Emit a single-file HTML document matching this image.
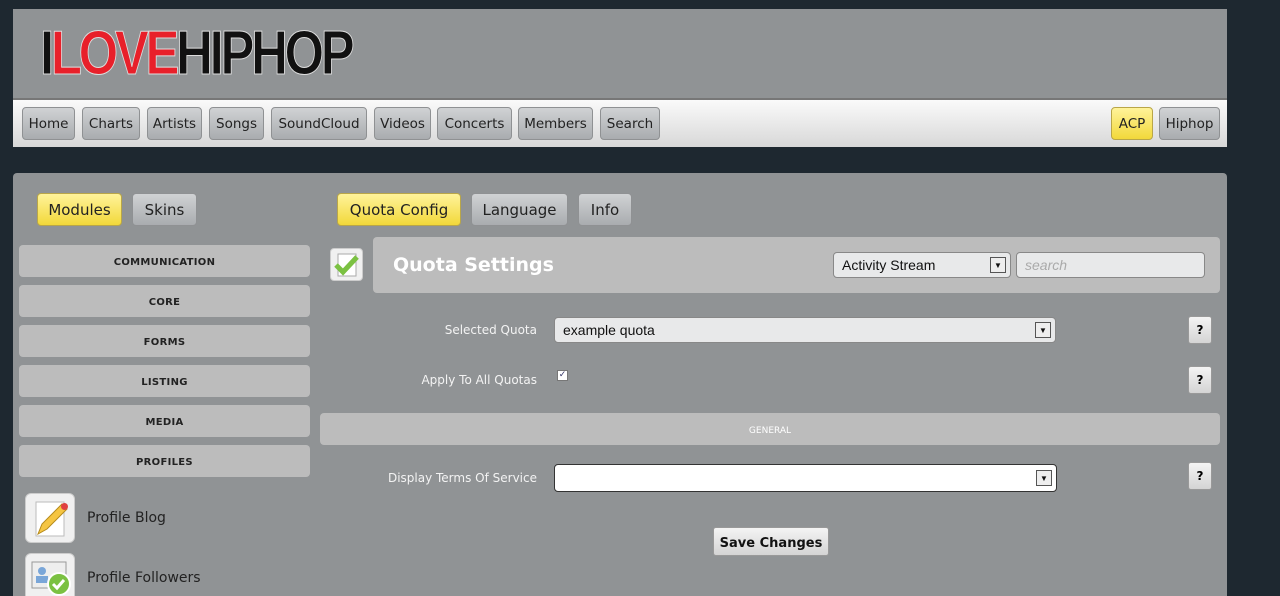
<!DOCTYPE html>
<html style="overflow:hidden;height:596px"><head><meta charset="utf-8"><style>
*{box-sizing:border-box;margin:0;padding:0}
body{width:1280px;height:596px;overflow:hidden;background:#1e2830;font-family:"DejaVu Sans","Liberation Sans",sans-serif;position:relative}
.a{position:absolute}
.hdr{left:13px;top:9px;width:1214px;height:89px;background:#909395}
.nav{left:13px;top:98px;width:1214px;height:49px;background:linear-gradient(#fafafa,#d8d8d8);border-top:2px solid #777}
.btn{position:absolute;height:33px;border:1px solid #8f9193;border-radius:4px;background:linear-gradient(#d0d2d4,#a9acaf);font-size:13.5px;color:#222;display:flex;align-items:center;justify-content:center}
.y{background:linear-gradient(#fff39a,#f2d83a);border-color:#b9a648}
.main{left:13px;top:173px;width:1214px;height:423px;background:#909395;border-radius:4px 4px 0 0}
.cat{position:absolute;left:19px;width:291px;height:32px;background:#bcbcbc;border-radius:4px;font-size:10px;font-weight:bold;color:#222;display:flex;align-items:center;justify-content:center;letter-spacing:.3px;padding-top:3px}
.lbl{position:absolute;font-size:12px;color:#f3f3f3;text-align:right;width:300px}
.sel{position:absolute;background:#e8e9ea;border:1px solid #888;border-radius:4px;font-family:"Liberation Sans",sans-serif;font-size:15px;color:#111;padding-left:8px;display:flex;align-items:center}
.dd{position:absolute;right:4px;top:50%;margin-top:-8px;width:16px;height:16px;border:1px solid #555;background:#eee;font-size:8px;display:flex;align-items:center;justify-content:center}
.q{position:absolute;left:1188px;width:24px;height:28px;border-radius:3px;background:linear-gradient(#f4f4f4,#d4d4d4);border:1px solid #999;font-size:12px;font-weight:bold;display:flex;align-items:center;justify-content:center}
.ic{position:absolute;left:25px;width:50px;height:50px;background:#f0f0f0;border:1px solid #ccc;border-radius:6px}
.pl{position:absolute;left:87px;font-size:14px;color:#222}
</style></head><body>
<div class="a hdr"></div>
<div class="a" style="left:40px;top:24px;font-family:'Liberation Sans',sans-serif;font-size:62px;font-weight:bold;letter-spacing:-4px;line-height:60px;-webkit-text-stroke:1px #ddd;transform:scaleX(0.82);transform-origin:left top;white-space:nowrap"><span style="color:#111">I</span><span style="color:#e8202a">LOVE</span><span style="color:#111">HIPHOP</span></div>
<div class="a nav"></div>
<div class="btn" style="left:22px;top:107px;width:53px">Home</div>
<div class="btn" style="left:82px;top:107px;width:58px">Charts</div>
<div class="btn" style="left:147px;top:107px;width:55px">Artists</div>
<div class="btn" style="left:209px;top:107px;width:55px">Songs</div>
<div class="btn" style="left:271px;top:107px;width:96px">SoundCloud</div>
<div class="btn" style="left:374px;top:107px;width:57px">Videos</div>
<div class="btn" style="left:437px;top:107px;width:75px">Concerts</div>
<div class="btn" style="left:518px;top:107px;width:75px">Members</div>
<div class="btn" style="left:600px;top:107px;width:60px">Search</div>
<div class="btn y" style="left:1111px;top:107px;width:42px">ACP</div>
<div class="btn" style="left:1159px;top:107px;width:61px">Hiphop</div>
<div class="a main"></div>
<div class="btn y" style="left:37px;top:193px;width:85px;font-size:15px">Modules</div>
<div class="btn" style="left:132px;top:193px;width:65px;font-size:15px">Skins</div>
<div class="cat" style="top:245px">COMMUNICATION</div>
<div class="cat" style="top:285px">CORE</div>
<div class="cat" style="top:325px">FORMS</div>
<div class="cat" style="top:365px">LISTING</div>
<div class="cat" style="top:405px">MEDIA</div>
<div class="cat" style="top:445px">PROFILES</div>
<div class="ic" style="top:493px"><svg width="50" height="50"><rect x="10" y="8" width="28" height="34" fill="#fff" stroke="#bbb"/><path d="M12 40 L16 30 L36 10 L41 15 L21 35 Z" fill="#f5c542" stroke="#b58a1a"/><circle cx="38.5" cy="12.5" r="3.5" fill="#e04040"/></svg></div>
<div class="pl" style="top:510px">Profile Blog</div>
<div class="ic" style="top:553px"><svg width="50" height="50"><rect x="6" y="8" width="34" height="26" fill="#eee" stroke="#999"/><circle cx="16" cy="17" r="4" fill="#7aa6d8"/><rect x="10" y="22" width="12" height="7" fill="#7aa6d8"/><circle cx="33" cy="30" r="11" fill="#7bc142" stroke="#fff" stroke-width="2"/><path d="M27 30 L31 34 L38 26" stroke="#fff" stroke-width="3" fill="none"/></svg></div>
<div class="pl" style="top:570px">Profile Followers</div>
<div class="btn y" style="left:337px;top:193px;width:124px;font-size:15px">Quota Config</div>
<div class="btn" style="left:471px;top:193px;width:97px;font-size:15px">Language</div>
<div class="btn" style="left:578px;top:193px;width:54px;font-size:15px">Info</div>
<div class="a" style="left:330px;top:248px;width:33px;height:33px;background:#f0f0f0;border:1px solid #ccc;border-radius:4px"><svg width="31" height="31"><rect x="7" y="5" width="18" height="22" fill="#fff" stroke="#aaa"/><path d="M5 16 L12 23 L26 8" stroke="#7bc142" stroke-width="5" fill="none"/></svg></div>
<div class="a" style="left:373px;top:237px;width:847px;height:56px;background:#bcbcbc;border-radius:4px"></div>
<div class="a" style="left:393px;top:254px;font-size:19px;font-weight:bold;color:#fff">Quota Settings</div>
<div class="sel" style="left:833px;top:252px;width:178px;height:26px;font-size:14px">Activity Stream<div class="dd">▼</div></div>
<div class="sel" style="left:1016px;top:252px;width:189px;height:26px;font-size:14px;color:#aaa;font-style:italic">search</div>
<div class="lbl" style="left:237px;top:323px">Selected Quota</div>
<div class="sel" style="left:554px;top:317px;width:502px;height:26px;font-size:14px">example quota<div class="dd">▼</div></div>
<div class="q" style="top:316px">?</div>
<div class="lbl" style="left:237px;top:373px">Apply To All Quotas</div>
<div class="a" style="left:557px;top:370px;width:11px;height:11px;background:#fff;border:1px solid #777;font-size:9px;color:#336;line-height:9px;text-align:center">✓</div>
<div class="q" style="top:366px">?</div>
<div class="a" style="left:320px;top:413px;width:900px;height:32px;background:#bcbcbc;border-radius:4px;font-size:9px;color:#fff;display:flex;align-items:center;justify-content:center;padding-top:4px">GENERAL</div>
<div class="lbl" style="left:237px;top:471px">Display Terms Of Service</div>
<div class="sel" style="left:554px;top:464px;width:503px;height:28px;background:#fff;border:1px solid #333"><div class="dd">▼</div></div>
<div class="q" style="top:462px">?</div>
<div class="a" style="left:713px;top:527px;width:116px;height:29px;border-radius:3px;background:linear-gradient(#f4f4f4,#d4d4d4);border:1px solid #999;font-size:13px;font-weight:bold;color:#111;display:flex;align-items:center;justify-content:center;padding-top:3px">Save Changes</div>
</body></html>
